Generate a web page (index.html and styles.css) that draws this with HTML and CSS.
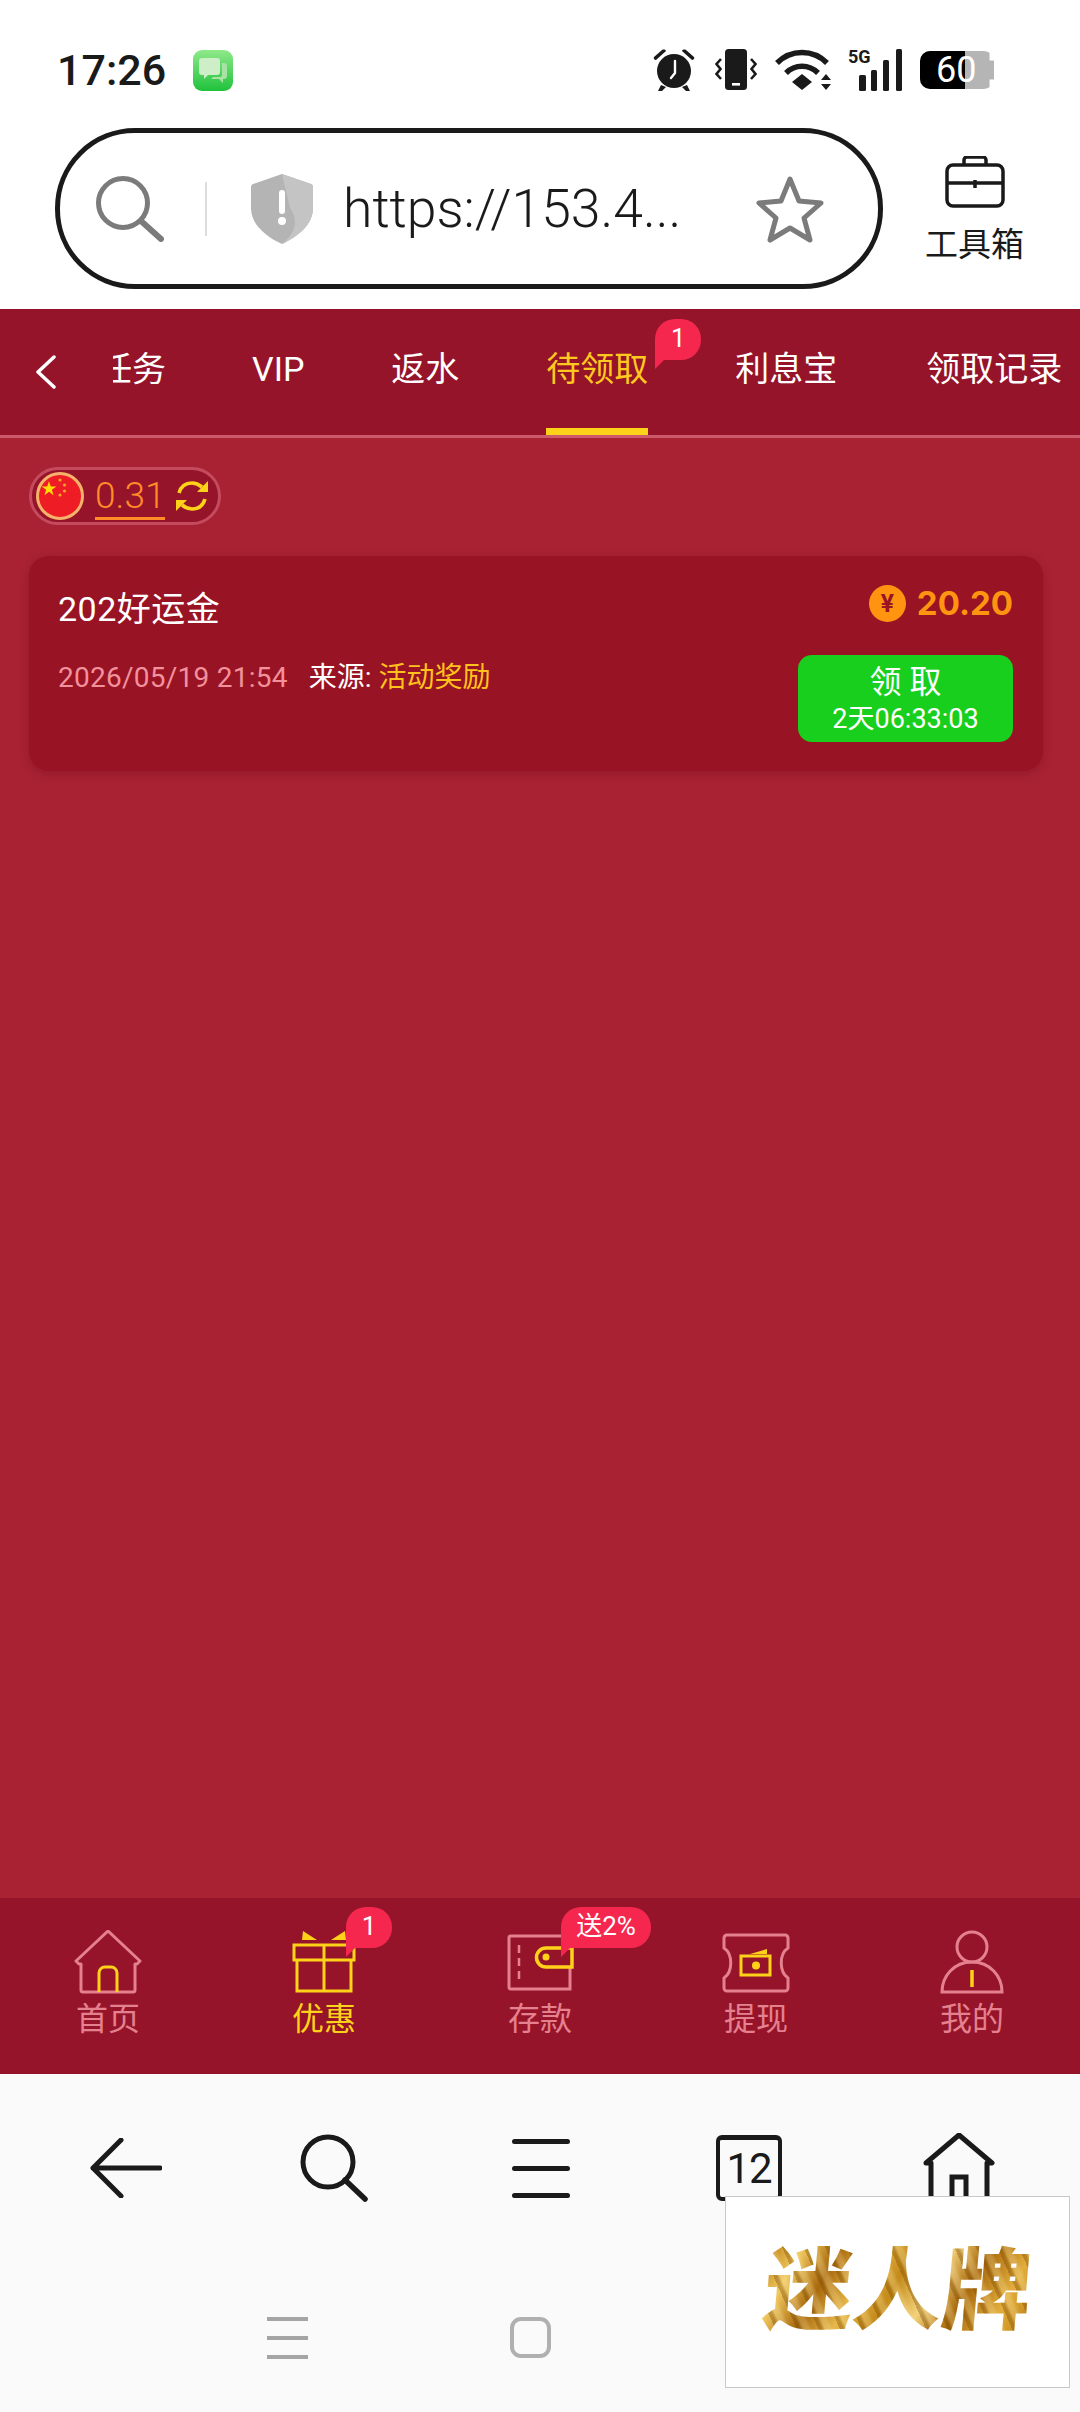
FILE: index.html
```html
<!DOCTYPE html>
<html lang="zh-CN">

<head>
	<meta charset="utf-8">
	<title>待领取</title>
	<link rel="stylesheet" href="styles.css">
</head>

<body>
	<div id="page">
		<!-- status bar -->
		<div class="status">
			<span class="time">17:26</span>
			<svg class="msg-app" viewBox="0 0 40 41">
				<defs>
					<linearGradient id="msgbg" x1="0" y1="0" x2="0" y2="1">
						<stop offset="0" stop-color="#8fe98a" />
						<stop offset="1" stop-color="#1fc23c" />
					</linearGradient>
				</defs>
				<rect width="40" height="41" rx="9" fill="url(#msgbg)" />
				<path d="M9 8h15a3 3 0 0 1 3 3v11a3 3 0 0 1-3 3h-9l-4 4v-4H9a3 3 0 0 1-3-3V11a3 3 0 0 1 3-3z" fill="#cdeec6" />
				<path d="M29 13h2a3 3 0 0 1 3 3v10a3 3 0 0 1-3 3h-1v4l-4-4h-8l2-2h7a2 2 0 0 0 2-2z" fill="#a8e2a4" />
			</svg>
			<div class="status-icons">
				<svg class="ic-alarm" viewBox="0 0 42 44">
					<path d="M1 9 9 2c2-1 4 0 4 1L3 12c-1 0-3-1-2-3zM41 9l-8-7c-2-1-4 0-4 1l10 9c1 0 3-1 2-3z" fill="#1a1a1a" />
					<circle cx="21" cy="23" r="17" fill="#1a1a1a" />
					<path d="M8 37 5 43h4l4-4zM34 37l3 6h-4l-4-4z" fill="#1a1a1a" />
					<path d="M22 13v12l-4 5" fill="none" stroke="#fff" stroke-width="2.4" stroke-linecap="round" stroke-linejoin="round" />
				</svg>
				<svg class="ic-vibrate" viewBox="0 0 42 42">
					<rect x="10" y="0" width="22" height="41" rx="3.5" fill="#1a1a1a" />
					<rect x="17" y="34" width="8" height="2.6" fill="#fff" />
					<path d="M6 10 1.500 15 5.500 20 1.500 25 6 30M36 10l4.500 5-4 5 4 5-4.500 5" fill="none" stroke="#1a1a1a" stroke-width="2.6" />
				</svg>
				<svg class="ic-wifi" viewBox="0 0 58 42">
					<path d="M2 14C16 0 38 0 52 14" fill="none" stroke="#1a1a1a" stroke-width="5.5" />
					<path d="M11 24c9-9 23-9 32 0" fill="none" stroke="#1a1a1a" stroke-width="5.5" />
					<path d="M17 33 27 25l10 8-10 8z" fill="#1a1a1a" />
					<path d="M46 31h10l-5-6zM46 35h10l-5 6z" fill="#1a1a1a" />
				</svg>
				<svg class="ic-signal" viewBox="0 0 56 42">
					<text x="0" y="14" class="five-g">5G</text>
					<rect x="11" y="26" width="7" height="16" rx="1.5" fill="#1a1a1a" />
					<rect x="23" y="21" width="6" height="21" rx="1.5" fill="#1a1a1a" />
					<rect x="35" y="11" width="6" height="31" rx="1.5" fill="#1a1a1a" />
					<rect x="48" y="0" width="6" height="42" rx="1.5" fill="#1a1a1a" />
				</svg>
				<div class="battery">
					<div class="battery-body">
						<div class="battery-fill"></div>
					</div>
					<span class="battery-num">60</span>
				</div>
			</div>
		</div>

		<!-- address bar -->
		<div class="urlrow">
			<div class="urlbar">
				<svg class="ic-search" viewBox="0 0 68 66">
					<circle cx="27" cy="27" r="24.5" fill="none" stroke="#7b7b7b" stroke-width="5" />
					<path d="M45 45 65 63" stroke="#7b7b7b" stroke-width="6" stroke-linecap="round" />
				</svg>
				<span class="url-sep"></span>
				<svg class="ic-shield" viewBox="0 0 62 70">
					<path d="M31 0 60 10c2 1 2 2 2 4v20c0 16-14 28-31 36C14 62 0 50 0 34V14c0-2 0-3 2-4z" fill="#b4b4b4" />
					<path d="M31 0 60 10c2 1 2 2 2 4v20c0 16-14 28-31 36 12-10 18-22 8-36z" fill="#c4c4c4" />
					<rect x="28" y="16" width="6" height="24" rx="3" fill="#fff" />
					<circle cx="31" cy="47" r="4" fill="#fff" />
				</svg>
				<span class="url-text">https://153.4...</span>
				<svg class="ic-star" viewBox="0 0 70 68">
					<path d="M35 4 44 26l22 2-17 15 6 22-20-12-20 12 6-22L4 28l22-2z" fill="none" stroke="#7b7b7b" stroke-width="5" stroke-linejoin="round" />
				</svg>
			</div>
			<div class="toolbox">
				<svg viewBox="0 0 60 52">
					<path d="M19 9V4a3 3 0 0 1 3-3h16a3 3 0 0 1 3 3v5" fill="none" stroke="#1a1a1a" stroke-width="3.5" />
					<rect x="2" y="9" width="56" height="41" rx="6" fill="none" stroke="#1a1a1a" stroke-width="3.5" />
					<path d="M2 27H58M30 24v8" stroke="#1a1a1a" stroke-width="3.5" fill="none" />
				</svg>
				<span>工具箱</span>
			</div>
		</div>

		<!-- tabs -->
		<div class="tabs">
			<svg class="tabs-back" viewBox="0 0 22 34">
				<path d="M19 2 3 17l16 15" fill="none" stroke="#fff" stroke-width="3.5" stroke-linecap="round" stroke-linejoin="round" />
			</svg>
			<div class="tabs-scroll">
				<a class="tab">任务</a>
				<a class="tab">VIP</a>
				<a class="tab">返水</a>
				<a class="tab tab-on">待领取<span class="bubble tab-bubble">1</span></a>
				<a class="tab">利息宝</a>
				<a class="tab">领取记录</a>
			</div>
		</div>

		<!-- main -->
		<div class="content">
			<div class="wallet">
				<svg class="flag" viewBox="0 0 48 48">
					<circle cx="24" cy="24" r="22.5" fill="#ee1c25" stroke="#f6b26b" stroke-width="3" />
					<path d="M14 10 16.200 16.500H23L17.500 20.500 19.500 27 14 23 8.500 27 10.500 20.500 5 16.500H11.800z" fill="#ffde00" transform="translate(1.5 1) scale(.82)" />
					<g fill="#f5a623">
						<circle cx="24" cy="8" r="1.6" />
						<circle cx="28.500" cy="13" r="1.6" />
						<circle cx="28.500" cy="19" r="1.6" />
						<circle cx="24" cy="23" r="1.6" />
					</g>
				</svg>
				<span class="balance">0.31</span>
				<svg class="refresh" viewBox="0 0 34 32">
					<path d="M4 13C6 6 11 3 17 3c4 0 7 1.500 10 4" fill="none" stroke="#ffd21a" stroke-width="3.6" />
					<path d="M33 1v11H22z" fill="#ffd21a" />
					<path d="M30 19c-2 7-7 10-13 10-4 0-7-1.500-10-4" fill="none" stroke="#ffd21a" stroke-width="3.6" />
					<path d="M1 31V20h11z" fill="#ffd21a" />
				</svg>
			</div>

			<div class="card">
				<div class="card-top">
					<span class="card-title">202好运金</span>
					<div class="amount">
						<span class="coin">¥</span>
						<span>20.20</span>
					</div>
				</div>
				<div class="card-bottom">
					<div class="meta">
						<span class="date">2026/05/19 21:54</span>
						<span class="source">来源: <em>活动奖励</em></span>
					</div>
					<div class="claim">
						<span class="claim-label">领 取</span>
						<span class="claim-time">2天06:33:03</span>
					</div>
				</div>
			</div>
		</div>

		<!-- site nav -->
		<div class="tabbar">
			<div class="navitem">
				<svg viewBox="0 0 70 64">
					<path d="M6 34 3 31 35 1 67 31l-3 3h-2v26a2 2 0 0 1-2 2H10a2 2 0 0 1-2-2V34z" fill="none" stroke="#e5808e" stroke-width="3" stroke-linejoin="round" />
					<path d="M26 62V43a6 6 0 0 1 6-6h6a6 6 0 0 1 6 6v19" fill="none" stroke="#ffd21a" stroke-width="3" />
				</svg>
				<span>首页</span>
			</div>
			<div class="navitem nav-on">
				<svg viewBox="0 0 70 64">
					<path d="M14 1 28 10H13zM56 1 42 10h15z" fill="#ffd21a" />
					<rect x="5" y="15" width="60" height="15" fill="none" stroke="#ffd21a" stroke-width="3" />
					<path d="M8 30V61H62V30M35 15V61" fill="none" stroke="#ffd21a" stroke-width="3" />
				</svg>
				<span>优惠</span>
				<span class="bubble nav-bubble">1</span>
			</div>
			<div class="navitem">
				<svg viewBox="0 0 70 64">
					<path d="M6 6H65V59H6a2 2 0 0 1-2-2V8a2 2 0 0 1 2-2z" fill="none" stroke="#e5808e" stroke-width="3" />
					<path d="M14 15V50" stroke="#e5808e" stroke-width="2.5" stroke-dasharray="8 5" />
					<path d="M67 18H41a9.500 9.500 0 0 0 0 19H67z" fill="#95142a" stroke="#ffd21a" stroke-width="3.5" />
					<circle cx="41" cy="27" r="3.500" fill="#ffd21a" />
				</svg>
				<span>存款</span>
				<span class="bubble nav-bubble wide">送2%</span>
			</div>
			<div class="navitem">
				<svg viewBox="0 0 70 64">
					<path d="M6 5H64a3 3 0 0 1 3 3V18C58 24 58 42 67 48V58a3 3 0 0 1-3 3H6a3 3 0 0 1-3-3V48C12 42 12 24 3 18V8a3 3 0 0 1 3-3z" fill="none" stroke="#e5808e" stroke-width="3" />
					<rect x="20" y="26" width="29" height="19" fill="none" stroke="#ffd21a" stroke-width="3" />
					<circle cx="35" cy="35.500" r="4" fill="#ffd21a" />
					<path d="M29 24 46 19v5z" fill="#ffd21a" />
				</svg>
				<span>提现</span>
			</div>
			<div class="navitem">
				<svg viewBox="0 0 70 64">
					<circle cx="35" cy="17" r="15" fill="none" stroke="#e5808e" stroke-width="3" />
					<path d="M5 62C5 46 17 32 35 32S65 46 65 62z" fill="none" stroke="#e5808e" stroke-width="3" />
					<path d="M35 40V57" stroke="#ffd21a" stroke-width="3.5" />
				</svg>
				<span>我的</span>
			</div>
		</div>

		<!-- browser toolbar -->
		<div class="toolbar">
			<div class="toolbar-row">
				<svg class="ic-back" viewBox="0 0 72 60">
					<path d="M31 2 3 30l28 28M3 30H70" fill="none" stroke="#1a1a1a" stroke-width="5" stroke-linecap="round" stroke-linejoin="round" />
				</svg>
				<svg class="ic-find" viewBox="0 0 68 68">
					<circle cx="28" cy="28" r="25" fill="none" stroke="#1a1a1a" stroke-width="5" />
					<path d="M45 46 65 65" stroke="#1a1a1a" stroke-width="5.5" stroke-linecap="round" />
				</svg>
				<div class="ic-menu"><i></i><i></i><i></i></div>
				<div class="ic-tabs">12</div>
				<svg class="ic-home" viewBox="0 0 72 70">
					<path d="M8 70V30H3L36 2 69 30H64V70" fill="none" stroke="#1a1a1a" stroke-width="5" stroke-linejoin="round" />
					<path d="M29 70V44H43V70" fill="none" stroke="#1a1a1a" stroke-width="5" />
				</svg>
			</div>
			<div class="sysnav">
				<div class="sys-menu"><i></i><i></i><i></i></div>
				<div class="sys-home"></div>
			</div>
			<div class="logo"><span>迷人牌</span></div>
		</div>
	</div>
</body>

</html>
```

FILE: styles.css
```css
* {
	box-sizing: border-box;
}

html,
body {
	margin: 0;
	padding: 0;
}

body {
	font-family: Roboto, "Noto Sans CJK SC", sans-serif;
	background: #fff;
}

#page {
	width: 1080px;
	height: 2412px;
	display: flex;
	flex-direction: column;
	overflow: hidden;
}

svg {
	display: block;
}

/* status bar */
.status {
	height: 128px;
	padding: 48px 0 0 57px;
	display: flex;
	align-items: flex-start;
	background: #fff;
}

.time {
	font-size: 43px;
	font-weight: 500;
	line-height: 44px;
	color: #1a1a1a;
}

.msg-app {
	width: 40px;
	height: 41px;
	margin: 2px 0 0 27px;
}

.status-icons {
	margin-left: auto;
	margin-right: 86px;
	display: flex;
	align-items: center;
	height: 44px;
}

.ic-alarm {
	width: 42px;
	height: 44px;
}

.ic-vibrate {
	width: 42px;
	height: 42px;
	margin-left: 20px;
}

.ic-wifi {
	width: 58px;
	height: 42px;
	margin-left: 18px;
}

.ic-signal {
	width: 56px;
	height: 42px;
	margin-left: 15px;
	overflow: visible;
}

.five-g {
	font-family: Roboto, sans-serif;
	font-size: 18px;
	font-weight: 700;
	fill: #1a1a1a;
}

.battery {
	position: relative;
	width: 74px;
	height: 38px;
	margin-left: 16px;
}

.battery-body {
	height: 38px;
	background: #b5b5b5;
	border-radius: 10px;
	overflow: hidden;
	clip-path: polygon(0 0, 94% 0, 94% 25%, 100% 25%, 100% 75%, 94% 75%, 94% 100%, 0 100%);
}

.battery-fill {
	width: 61%;
	height: 100%;
	background: #000;
}

.battery-num {
	position: absolute;
	left: 16px;
	top: 0;
	line-height: 38px;
	font-size: 36px;
	color: #fff;
}

/* address bar */
.urlrow {
	height: 181px;
	padding-left: 55px;
	display: flex;
	align-items: flex-start;
	background: #fff;
}

.urlbar {
	width: 828px;
	height: 161px;
	border: 5px solid #1a1a1a;
	border-radius: 80px;
	display: flex;
	align-items: center;
	padding-left: 36px;
}

.ic-search {
	width: 68px;
	height: 66px;
}

.url-sep {
	width: 2px;
	height: 54px;
	margin-left: 41px;
	background: #ddd;
}

.ic-shield {
	width: 62px;
	height: 70px;
	margin-left: 44px;
}

.url-text {
	width: 345px;
	margin-left: 30px;
	font-size: 53.5px;
	font-weight: 300;
	color: #1a1a1a;
	white-space: nowrap;
}

.ic-star {
	width: 70px;
	height: 68px;
	margin-left: 67px;
}

.toolbox {
	width: 183px;
	display: flex;
	flex-direction: column;
	align-items: center;
	padding-top: 28px;
	font-size: 33px;
	line-height: 46px;
	color: #1a1a1a;
}

.toolbox svg {
	width: 60px;
	height: 52px;
	margin-bottom: 14px;
}

/* tabs */
.tabs {
	height: 129px;
	display: flex;
	align-items: flex-start;
	background: #95142a;
	border-bottom: 3px solid #cc5a6b;
}

.tabs-back {
	width: 22px;
	height: 34px;
	margin: 46px 0 0 35px;
	flex: none;
}

.tabs-scroll {
	flex: 1;
	margin-left: 56px;
	height: 126px;
	display: flex;
	gap: 87px;
	overflow: hidden;
}

.tab {
	position: relative;
	flex: none;
	height: 126px;
	padding-top: 36px;
	font-size: 34px;
	line-height: 48px;
	color: #fff;
	white-space: nowrap;
}

.tab:first-child {
	margin-left: -15px;
}

.tab:nth-child(2) {
	margin-left: -1px;
}

.tab:last-child {
	margin-left: 2px;
}

.tab-on {
	color: #ffc81e;
	border-bottom: 7px solid #ffd21a;
}

.bubble {
	position: absolute;
	height: 41px;
	background: #f5274f;
	color: #fff;
	font-size: 26px;
	line-height: 38px;
	text-align: center;
	white-space: nowrap;
	border-radius: 20px 20px 20px 0;
}

.bubble::after {
	content: "";
	position: absolute;
	left: 0;
	bottom: -9px;
	border-top: 9px solid #f5274f;
	border-right: 9px solid transparent;
}

.tab-bubble {
	left: 109px;
	top: 10px;
	width: 46px;
}

/* content */
.content {
	flex: 1;
	padding: 29px 37px 0 29px;
	background: #a82233;
}

.wallet {
	width: 192px;
	height: 58px;
	display: flex;
	align-items: center;
	padding-left: 4px;
	border: 3px solid #c44b5e;
	border-radius: 29px;
	background: #95142a;
}

.flag {
	width: 48px;
	height: 48px;
	flex: none;
}

.balance {
	margin-left: 11px;
	height: 48px;
	font-size: 37px;
	font-weight: 300;
	line-height: 47px;
	color: #ff8c28;
	border-bottom: 3px solid #ff8c28;
}

.refresh {
	width: 34px;
	height: 32px;
	margin-left: 10px;
	flex: none;
}

.card {
	height: 215px;
	margin-top: 31px;
	padding: 28px 30px 0 29px;
	background: #981324;
	border-radius: 20px;
	box-shadow: 0 3px 10px rgba(90, 0, 15, .25);
}

.card-top {
	display: flex;
	justify-content: space-between;
	align-items: flex-start;
	height: 71px;
}

.card-title {
	font-size: 34px;
	line-height: 50px;
	letter-spacing: .5px;
	color: #fff;
}

.amount {
	display: flex;
	align-items: center;
	gap: 11px;
	margin-top: -3px;
	font-family: Inter, Roboto, sans-serif;
	font-size: 33px;
	font-weight: 700;
	line-height: 44px;
	color: #ff9410;
}

.coin {
	width: 37px;
	height: 37px;
	border-radius: 50%;
	background: #ff9410;
	color: #981324;
	font-size: 24px;
	line-height: 37px;
	text-align: center;
}

.card-bottom {
	display: flex;
	justify-content: space-between;
	align-items: flex-start;
}

.meta {
	display: flex;
	gap: 21px;
	font-size: 28px;
	line-height: 40px;
	padding-top: 3px;
}

.date {
	letter-spacing: .25px;
	color: #f2919c;
}

.source {
	color: #fff;
}

.source em {
	font-style: normal;
	color: #ffc21c;
}

.claim {
	width: 215px;
	height: 87px;
	display: flex;
	flex-direction: column;
	align-items: center;
	padding-top: 6px;
	border-radius: 14px;
	background: #18cf1d;
	color: #fff;
}

.claim-label {
	font-size: 32px;
	line-height: 42px;
}

.claim-time {
	font-size: 27px;
	line-height: 32px;
}

/* site nav */
.tabbar {
	height: 176px;
	flex: none;
	display: flex;
	background: #95142a;
}

.navitem {
	position: relative;
	flex: 1;
	display: flex;
	flex-direction: column;
	align-items: center;
	padding-top: 32px;
	font-size: 32px;
	line-height: 46px;
	color: #e5808e;
}

.navitem svg {
	width: 70px;
	height: 64px;
	margin-bottom: 2px;
}

.nav-on {
	color: #ffd21a;
}

.nav-bubble {
	left: 130px;
	top: 9px;
	width: 46px;
}

.nav-bubble.wide {
	left: 129px;
	width: 90px;
}

/* browser toolbar */
.toolbar {
	position: relative;
	height: 338px;
	flex: none;
	padding-top: 28px;
	background: #fafafa;
}

.toolbar-row {
	height: 132px;
	display: flex;
	align-items: center;
	padding-left: 90px;
}

.ic-back {
	width: 72px;
	height: 60px;
}

.ic-find {
	width: 68px;
	height: 68px;
	margin-left: 138px;
}

.ic-menu {
	width: 58px;
	height: 59px;
	margin-left: 144px;
	display: flex;
	flex-direction: column;
	justify-content: space-between;
}

.ic-menu i {
	height: 5px;
	border-radius: 3px;
	background: #1a1a1a;
}

.ic-tabs {
	width: 66px;
	height: 66px;
	margin-left: 146px;
	border: 4px solid #1a1a1a;
	border-top-width: 5px;
	border-radius: 6px;
	font-size: 42px;
	letter-spacing: -1px;
	line-height: 58px;
	text-align: center;
	color: #1a1a1a;
}

.ic-home {
	width: 72px;
	height: 70px;
	margin-left: 141px;
}

.sysnav {
	display: flex;
	margin-top: 83px;
	padding-left: 267px;
}

.sys-menu {
	width: 41px;
	height: 42px;
	display: flex;
	flex-direction: column;
	justify-content: space-between;
}

.sys-menu i {
	height: 4px;
	background: #a5a5a5;
}

.sys-home {
	width: 41px;
	height: 41px;
	margin-left: 202px;
	border: 4px solid #b0b0b0;
	border-radius: 11px;
}

.logo {
	position: absolute;
	left: 725px;
	top: 122px;
	width: 345px;
	height: 192px;
	display: flex;
	align-items: center;
	justify-content: center;
	background: #fff;
	border: 1px solid #c9c9c9;
}

.logo span {
	font-size: 89px;
	font-weight: 900;
	line-height: 100px;
	white-space: nowrap;
	transform: skewX(-5deg);
	color: transparent;
	background:
		repeating-linear-gradient(62deg, rgba(120, 70, 0, .35) 0 3px, rgba(255, 240, 180, .25) 6px 10px, rgba(120, 70, 0, 0) 14px 19px),
		linear-gradient(115deg, #b97a10 0%, #f0c860 12%, #a8680c 24%, #e7b84a 36%, #c48a1a 48%, #f3d27a 60%, #a8680c 72%, #e2ad3c 86%, #b97a10 100%);
	-webkit-background-clip: text;
	background-clip: text;
}
```
